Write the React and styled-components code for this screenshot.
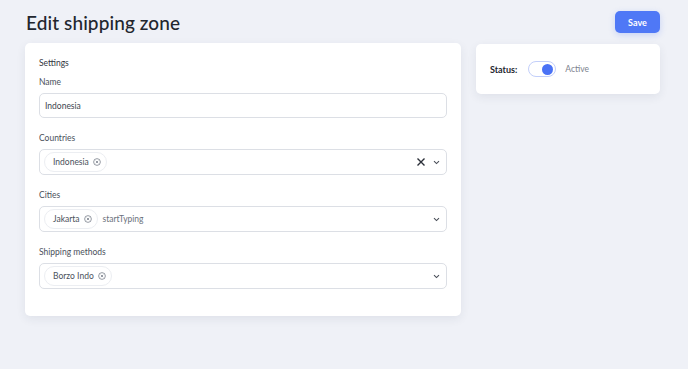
import React from "react";
import styled, { createGlobalStyle } from "styled-components";

const Global = createGlobalStyle`
  html, body { margin: 0; padding: 0; background: #eff1f7; }
  body { font-family: "Lato", "Noto Sans", sans-serif; color: #2a2f3a; }
  * { box-sizing: border-box; }
`;

const Page = styled.div`
  width: 688px;
  height: 369px;
  padding: 11px 28px 0 25px;
`;

const Header = styled.div`
  display: flex;
  align-items: center;
  justify-content: space-between;
  height: 22px;
  margin-bottom: 10px;
`;

const Title = styled.h1`
  margin: 0 0 0 1px;
  font-size: 19px;
  font-weight: 500;
  color: #22262e;
  letter-spacing: 0.1px;
`;

const SaveButton = styled.button`
  width: 45px;
  height: 22px;
  border: none;
  border-radius: 5px;
  background: #4f78f6;
  color: #fff;
  font-family: inherit;
  font-size: 9px;
  font-weight: 700;
  box-shadow: 0 2px 6px rgba(79, 120, 246, 0.25);
`;

const Columns = styled.div`
  display: grid;
  grid-template-columns: 436px 184px;
  gap: 15px;
  align-items: start;
`;

const Card = styled.div`
  background: #fff;
  border-radius: 5px;
  box-shadow: 0 3px 10px rgba(40, 50, 80, 0.08);
  padding: ${(p) => p.$pad};
  margin-top: ${(p) => p.$mt || 0}px;
`;

const SectionTitle = styled.div`
  font-size: 8.5px;
  color: #2f343d;
  line-height: 10px;
  margin-bottom: 9px;
`;

const Field = styled.div`
  display: flex;
  flex-direction: column;
  gap: 5px;
  margin-bottom: 15px;
  &:last-child { margin-bottom: 0; }
`;

const Label = styled.label`
  font-size: 8.5px;
  color: #4a505b;
  line-height: 11px;
`;

const Box = styled.div`
  height: ${(p) => p.$h || 26}px;
  border: 1px solid #dcdfe5;
  border-radius: 5px;
  display: flex;
  align-items: center;
  padding: 0 4px 0 4px;
  gap: 5px;
`;

const InputText = styled.span`
  font-size: 8.5px;
  color: #40454f;
  padding-left: 1px;
`;

const Chip = styled.span`
  display: inline-flex;
  align-items: center;
  gap: 4px;
  height: 20px;
  padding: 0 5px 0 8px;
  border: 1px solid #eceef2;
  border-radius: 10px;
  font-size: 8.5px;
  color: #4b515c;
`;

const Placeholder = styled.span`
  font-size: 8.5px;
  color: #6b717c;
  flex: 1;
`;

const Spacer = styled.span`
  flex: 1;
`;

const Icons = styled.span`
  display: flex;
  align-items: center;
  gap: 7px;
  padding-right: 2px;
`;

const StatusRow = styled.div`
  display: flex;
  align-items: center;
`;

const StatusLabel = styled.span`
  font-size: 9px;
  font-weight: 700;
  color: #22262e;
  margin-right: 11px;
`;

const Toggle = styled.span`
  width: 28px;
  height: 16px;
  border: 1px solid #c3cffa;
  border-radius: 8px;
  display: flex;
  align-items: center;
  justify-content: flex-end;
  padding: 0 2px;
  margin-right: 9px;
`;

const Knob = styled.span`
  width: 11px;
  height: 11px;
  border-radius: 50%;
  background: #4a72f5;
`;

const StatusValue = styled.span`
  font-size: 8.5px;
  color: #7c828d;
`;

const ChipRemove = () => (
  <svg width="8" height="8" viewBox="0 0 10 10">
    <circle cx="5" cy="5" r="4.2" fill="none" stroke="#6d7380" strokeWidth="0.9" />
    <path d="M3.5 3.5 L6.5 6.5 M6.5 3.5 L3.5 6.5" stroke="#6d7380" strokeWidth="0.9" />
  </svg>
);

const Clear = () => (
  <svg width="10" height="10" viewBox="0 0 10 10">
    <path d="M1.5 1.5 L8.5 8.5 M8.5 1.5 L1.5 8.5" stroke="#2b2f38" strokeWidth="1.4" />
  </svg>
);

const Chevron = () => (
  <svg width="7" height="5" viewBox="0 0 7 5">
    <path d="M1 1.2 L3.5 3.6 L6 1.2" fill="none" stroke="#4a4f59" strokeWidth="1.1" />
  </svg>
);

export default function App() {
  return (
    <>
      <Global />
      <Page>
        <Header>
          <Title>Edit shipping zone</Title>
          <SaveButton>Save</SaveButton>
        </Header>
        <Columns>
          <Card $pad="15px 14px 27px 14px">
            <SectionTitle>Settings</SectionTitle>
            <Field>
              <Label>Name</Label>
              <Box $h={25}>
                <InputText>Indonesia</InputText>
              </Box>
            </Field>
            <Field>
              <Label>Countries</Label>
              <Box>
                <Chip>Indonesia <ChipRemove /></Chip>
                <Spacer />
                <Icons><Clear /><Chevron /></Icons>
              </Box>
            </Field>
            <Field>
              <Label>Cities</Label>
              <Box>
                <Chip>Jakarta <ChipRemove /></Chip>
                <Placeholder>startTyping</Placeholder>
                <Icons><Chevron /></Icons>
              </Box>
            </Field>
            <Field>
              <Label>Shipping methods</Label>
              <Box>
                <Chip>Borzo Indo <ChipRemove /></Chip>
                <Spacer />
                <Icons><Chevron /></Icons>
              </Box>
            </Field>
          </Card>
          <Card $pad="17px 14px" $mt={1}>
            <StatusRow>
              <StatusLabel>Status:</StatusLabel>
              <Toggle><Knob /></Toggle>
              <StatusValue>Active</StatusValue>
            </StatusRow>
          </Card>
        </Columns>
      </Page>
    </>
  );
}
